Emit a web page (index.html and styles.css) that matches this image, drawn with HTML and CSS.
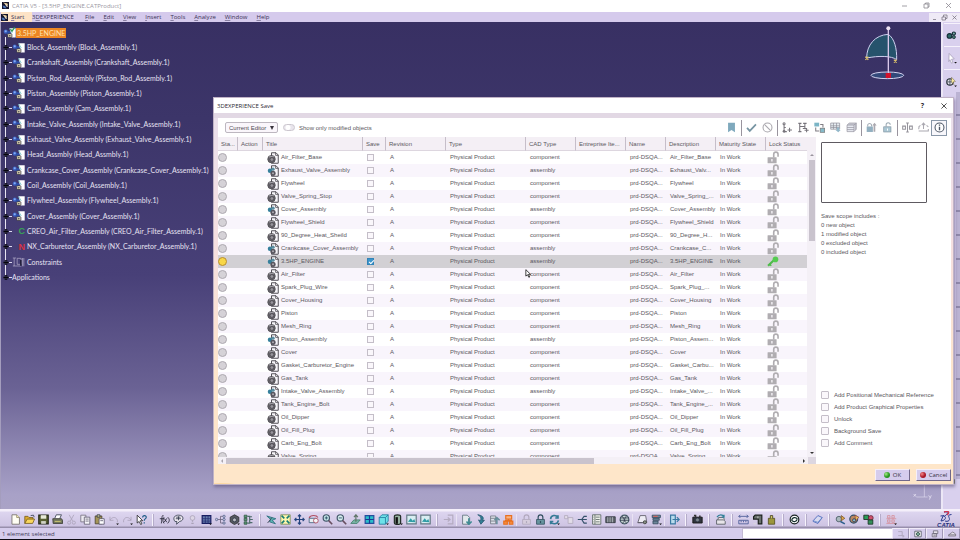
FILE: index.html
```html
<!DOCTYPE html>
<html lang="en">
<head>
<meta charset="utf-8">
<title>CATIA V5 - [3.5HP_ENGINE.CATProduct]</title>
<link rel="stylesheet" href="styles.css">
</head>
<body>
<svg class="sprite" aria-hidden="true">
  <symbol id="app" viewBox="0 0 14 14"><rect width="14" height="14" fill="#15152c"/><path d="M2 1l9 2 1 5-5-3z" fill="#f4d9a2"/><path d="M1 7l5 1 3 5-6-1z" fill="#4a74b8"/><path d="M7 5l4 5" stroke="#fff" stroke-width="2"/></symbol>
  <symbol id="product" viewBox="0 0 38 28"><path d="M19 0h18v27H25z" fill="#fff"/><path d="M19 0l8 14" stroke="#4bb4bd" stroke-width="2"/><circle cx="8" cy="10" r="6" fill="#3c62c4"/><circle cx="8" cy="9" r="3" fill="#88aef0"/><circle cx="17" cy="14" r="6" fill="#2d4fa8"/><rect x="14" y="16" width="12" height="11" rx="2" fill="#e6deb9" stroke="#282438" stroke-width="2"/><circle cx="20" cy="22" r="2" fill="#282438"/></symbol>
  <symbol id="expand" viewBox="0 0 10 10"><circle cx="5" cy="5" r="3.6" fill="#4a4668" stroke="#161426"/><path d="M5 1v8M1 5h8" stroke="#05050c" stroke-width="1.7"/></symbol>
  <symbol id="part" viewBox="0 0 32 32"><path d="M12 2h12l6 6v22H12z" fill="#f6f4f8" stroke="#4b484f" stroke-width="2.5"/><path d="M23 2v7h7" fill="none" stroke="#4b484f" stroke-width="2"/><circle cx="12" cy="19" r="10" fill="#68656c" stroke="#4b494e" stroke-width="2"/><circle cx="13" cy="20" r="5" fill="#98959c" stroke="#49474c" stroke-width="2"/><path d="M5 13l14-2" stroke="#b6b3ba" stroke-width="2"/></symbol>
  <symbol id="assembly" viewBox="0 0 32 32"><path d="M12 2h12l6 6v22H12z" fill="#f6f4f8" stroke="#4b484f" stroke-width="2.5"/><path d="M23 2v7h7" fill="none" stroke="#4b484f" stroke-width="2"/><circle cx="8" cy="15" r="6" fill="#36809c"/><circle cx="16" cy="11" r="4.5" fill="#5a8da0"/><circle cx="16" cy="22" r="7" fill="#58555e"/><circle cx="16" cy="22" r="2.5" fill="#b6b3ba"/></symbol>
  <symbol id="unlock" viewBox="0 0 32 36"><path d="M18 18V9a6 6 0 0 1 12 0v7" fill="none" stroke="#b0adb1" stroke-width="4.5"/><rect x="1" y="17" width="25" height="17" rx="1" fill="#b0adb1"/><path d="M13 22v7" stroke="#f3f0f5" stroke-width="4"/></symbol>
  <symbol id="key" viewBox="0 0 34 30"><path d="M3 27L20 11" stroke="#4dbb49" stroke-width="6"/><path d="M7 22l5 5" stroke="#4dbb49" stroke-width="4"/><circle cx="24" cy="9" r="8" fill="#55cb50"/></symbol>
</svg>

<header class="titlebar">
  <svg class="app-icon"><use href="#app"/></svg><h1>CATIA V5 - [3.5HP_ENGINE.CATProduct]</h1>
  <div class="window-controls">
    <button aria-label="Minimize"><svg viewBox="0 0 14 14"><path d="M2 8h10"/></svg></button>
    <button aria-label="Restore"><svg viewBox="0 0 14 14"><path d="M2 4h8v8H2zM5 4V2h7v8h-2"/></svg></button>
    <button aria-label="Close"><svg viewBox="0 0 14 14"><path d="M2 2l10 10M12 2L2 12"/></svg></button>
  </div>
</header>
<nav class="menubar">
  <a class="start" href="#"><svg class="app-icon"><use href="#app"/></svg><span><u>S</u>tart</span></a>
  <a class="platform" href="#">3<u>D</u>EXPERIENCE</a><a href="#"><u>F</u>ile</a><a href="#"><u>E</u>dit</a><a href="#"><u>V</u>iew</a><a href="#"><u>I</u>nsert</a><a href="#"><u>T</u>ools</a><a href="#"><u>A</u>nalyze</a><a href="#"><u>W</u>indow</a><a href="#"><u>H</u>elp</a>
  <div class="mdi-controls">
    <button aria-label="Minimize document"><svg viewBox="0 0 14 14"><path d="M4 11h6"/></svg></button>
    <button aria-label="Restore document"><svg viewBox="0 0 14 14"><path d="M2 6h7v6H2zM5 6V2h7v7H9"/></svg></button>
    <button aria-label="Close document"><svg viewBox="0 0 14 14"><path d="M3 3l8 8M11 3l-8 8"/></svg></button>
  </div>
</nav>

<main class="workspace">
  <section class="canvas">
    <div class="tree-root"><svg class="product"><use href="#product"/></svg><span>3.5HP_ENGINE</span><svg class="root-tick" viewBox="0 0 12 12"><path d="M1 5l4 5 6-9" fill="none" stroke="#2f9a52" stroke-width="3"/></svg></div>
    <ul class="tree" id="tree"></ul>
    <svg class="compass" viewBox="0 0 120 165">
      <path d="M5 99C5 60 30 30 70 28C88 40 96 70 95 104C80 92 40 92 5 99z" fill="#26536c" stroke="#cfd0ef" stroke-width="3"/>
      <ellipse cx="67" cy="151" rx="49" ry="10" fill="#33497a" stroke="#d5d3f0" stroke-width="3"/>
      <path d="M70 10v140" stroke="#d9c8ea" stroke-width="4"/><circle cx="70" cy="10" r="6" fill="#eee3f2"/>
      <rect x="62" y="144" width="16" height="15" fill="#d3122c"/><path d="M1 95l9 9M10 95l-9 9M87 104l8 9M95 104l-8 9" stroke="#dec36c" stroke-width="4"/>
    </svg>
    <svg class="axis" viewBox="0 0 60 54"><path d="M34 0v42M10 42h34" stroke="#ded9ef" stroke-width="2"/><path d="M2 33l7 8M9 33l-7 8M47 37l4 7M55 37l-6 13" stroke="#f0ecfa" stroke-width="2"/></svg>
  </section>
  <aside class="right-tools">
    <button aria-label="Product structure"><svg viewBox="0 0 28 28"><circle cx="9" cy="15" r="6" fill="#2d6969" stroke="#17303a" stroke-width="3"/><circle cx="20" cy="9" r="4" fill="#79aba5" stroke="#17303a" stroke-width="3"/><circle cx="20" cy="18" r="4" fill="#48756f" stroke="#17303a" stroke-width="2"/></svg></button>
    <button aria-label="Select"><svg viewBox="0 0 28 28"><path d="M8 1l13 14-7 1 4 8-4 2-4-9-3 5z" fill="#fff" stroke="#a7a0b9" stroke-width="2"/><path d="M21 23h7l-4 4z" fill="#111"/></svg></button>
    <button aria-label="Explore"><svg viewBox="0 0 28 28"><circle cx="10" cy="15" r="8" fill="#e4e1ea" stroke="#283039" stroke-width="3"/><path d="M3 15h14M10 7v16" stroke="#34414b" stroke-width="2"/><path d="M14 3l10 11-6 1 2 7-6-7z" fill="#f8e89c" stroke="#4c4937"/><path d="M21 24h7l-4 4z" fill="#111"/></svg></button>
    <div class="right-rail"></div>
    <svg class="tool-last" viewBox="0 0 28 20"><path d="M2 2h18v10H2z" fill="#98a72c" stroke="#444b1e" stroke-width="3"/><circle cx="10" cy="7" r="4" fill="#f3ec99"/></svg>
  </aside>

  <section class="dialog" role="dialog" aria-labelledby="dlg-title">
    <div class="dialog-title"><h2 id="dlg-title">3DEXPERIENCE Save</h2><button class="help">?</button><button aria-label="Close"><svg viewBox="0 0 14 14"><path d="M1 1l12 12M13 1L1 13"/></svg></button></div>
    <div class="dialog-body">
      <div class="dialog-tools">
        <label class="scope"><select aria-label="Scope"><option>Current Editor</option></select></label>
        <label class="toggle"><input type="checkbox"><span>Show only modified objects</span></label>
        <div class="actions">
          <button aria-label="Bookmark"><svg viewBox="0 0 32 32"><path d="M6 2h20v28l-10-7-10 7z" fill="#7fa9bd"/></svg></button><i></i>
          <button aria-label="Apply"><svg viewBox="0 0 32 32"><path d="M3 17l8 9L29 7" fill="none" stroke="#7795a3" stroke-width="5"/></svg></button>
          <button aria-label="Exclude"><svg viewBox="0 0 32 32"><circle cx="16" cy="16" r="13" fill="none" stroke="#a8a6ac" stroke-width="3"/><path d="M7 7l18 18" stroke="#a8a6ac" stroke-width="3"/></svg></button><i></i>
          <button aria-label="Select children"><svg viewBox="0 0 32 32"><g fill="none" stroke="#77747b" stroke-width="3"><circle cx="6" cy="5" r="3"/><path d="M6 8v20h8M6 16h5M22 17v12M16 23h13"/></g><circle cx="6" cy="27" r="4" fill="#77747b"/></svg></button>
          <button aria-label="Select all children"><svg viewBox="0 0 32 32"><path d="M5 2v27M5 13h15M20 2v18M1 4h9M1 28h9M15 4h10M14 19h12M25 18v12M19 24h12" fill="none" stroke="#77747b" stroke-width="3"/></svg></button>
          <button aria-label="Reserve"><svg viewBox="0 0 32 32"><rect x="1" y="2" width="14" height="11" fill="#7bb5c6"/><rect x="18" y="18" width="13" height="12" fill="#85bac9" stroke="#777" stroke-width="2"/><path d="M18 7h8v9M5 16v10h10" fill="none" stroke="#807d83" stroke-width="3"/></svg></button>
          <button aria-label="Export table"><svg viewBox="0 0 32 32"><path d="M2 3h26v18H2zM2 11h26M2 16h26M10 3v18M19 3v18" fill="#e7edf2" stroke="#8d8e98" stroke-width="2"/><path d="M20 16h7v7h4l-7 7-8-7h4z" fill="#93b8ca"/></svg></button>
          <button aria-label="Collections"><svg viewBox="0 0 32 32"><path d="M3 9l7-6h20v18l-7 7H3zM3 9h20v19M23 9l7-6M3 16h20M3 22h20M7 6h20v18" fill="#e6e9f0" stroke="#9695a0" stroke-width="2"/></svg></button><i></i>
          <button aria-label="Lock after save"><svg viewBox="0 0 32 32"><rect x="2" y="13" width="18" height="16" fill="#92afc0"/><path d="M5 13V8a6 6 0 0 1 11 0v5" fill="none" stroke="#a4adb7" stroke-width="3"/><path d="M22 28V10h-4l7-8 6 8h-4v18z" fill="#aaa8af"/></svg></button>
          <button aria-label="Unlock after save"><svg viewBox="0 0 32 32"><rect x="5" y="14" width="21" height="15" fill="#abc7d4" stroke="#8195a2" stroke-width="2"/><path d="M12 14V8a6 6 0 0 1 12 0" fill="none" stroke="#9caab4" stroke-width="3"/><path d="M16 19v6" stroke="#fff" stroke-width="3"/></svg></button><i></i>
          <button aria-label="Compare"><svg viewBox="0 0 32 32"><path d="M16 3v26M12 3h8M12 29h8M2 12h8v9H2zM22 12h8v9h-8z" fill="none" stroke="#96949c" stroke-width="3"/></svg></button>
          <button aria-label="Impact"><svg viewBox="0 0 32 32"><path d="M16 4v16M11 9l5-6 5 6M3 14l-1 7M2 14l5-4M30 14l-5-4M2 26h28v-6" fill="none" stroke="#aaa8b0" stroke-width="3"/></svg></button>
          <button class="pressed" aria-label="Information"><svg viewBox="0 0 32 32"><circle cx="16" cy="16" r="13" fill="#fff" stroke="#4c5665" stroke-width="3"/><path d="M16 14v10M16 7v4" stroke="#4c5665" stroke-width="4"/></svg></button>
        </div>
      </div>
      <div class="dialog-main">
        <div class="grid-pane">
          <div class="table-view">
            <table>
              <colgroup><col class="c-status"><col class="c-action"><col class="c-title"><col class="c-save"><col class="c-revision"><col class="c-type"><col class="c-cad"><col class="c-cad"><col class="c-name"><col class="c-cad"><col class="c-cad"><col></colgroup>
              <thead><tr><th>Sta...</th><th>Action</th><th>Title</th><th>Save</th><th>Revision</th><th>Type</th><th>CAD Type</th><th>Entreprise Ite...</th><th>Name</th><th>Description</th><th>Maturity State</th><th>Lock Status</th></tr></thead>
              <tbody id="rows"></tbody>
            </table>
          </div>
          <div class="scroll-y"><span></span><div class="thumb"></div><b></b></div>
          <div class="scroll-x"><span></span><div class="thumb"></div><b></b></div>
        </div>
        <aside class="info">
          <div class="preview"></div>
          <p>Save scope includes :<br>0 new object<br>1 modified object<br>0 excluded object<br>0 included object</p>
          <div class="options">
            <label><input type="checkbox">Add Positional Mechanical Reference</label>
            <label><input type="checkbox">Add Product Graphical Properties</label>
            <label><input type="checkbox">Unlock</label>
            <label><input type="checkbox">Background Save</label>
            <label><input type="checkbox">Add Comment</label>
          </div>
        </aside>
      </div>
    </div>
    <footer class="dialog-footer"><button><span class="dot green"></span>OK</button><button><span class="dot red"></span>Cancel</button></footer>
  </section>
  <svg class="pointer" viewBox="0 0 14 20"><path d="M2 1v15l4-3 3 6 2-1-3-6h5z" fill="#fff" stroke="#222" stroke-width="2"/></svg>
</main>

<div class="toolbar" id="toolbar"></div>
<footer class="statusbar"><span>1 element selected</span><input type="text" aria-label="Power input">
  <button aria-label="Command list"><svg viewBox="0 0 24 20"><path d="M5 4h10v10H5M15 14h4v3h-4" fill="none" stroke="#aaa3b8" stroke-width="2"/></svg></button>
  <button aria-label="Render"><svg viewBox="0 0 24 20"><path d="M4 3h16v14H4z" fill="#fff" stroke="#4d5360" stroke-width="2"/><circle cx="12" cy="10" r="4" fill="#7eae9c" stroke="#294640" stroke-width="2"/></svg></button>
  <button aria-label="Server"><svg viewBox="0 0 24 20"><path d="M8 2h11v7H8zM5 9h11v8H5zM8 13h6" fill="#e5e1eb" stroke="#6d6878" stroke-width="2"/></svg></button>
  <button aria-label="Session"><svg viewBox="0 0 24 20"><path d="M3 15h18v-5l-7-5-8 5zM3 12h18" fill="#e5e1eb" stroke="#77727f" stroke-width="2"/></svg></button>
</footer>
<script src="app.js"></script>
</body>
</html>
```
FILE: styles.css
```css
* { box-sizing: border-box; }
html, body { height: 100%; }
body { margin: 0; display: flex; flex-direction: column; overflow: hidden; background: #0c0a12; font: 6px/8px "Open Sans", "Noto Sans", sans-serif; color: #3b3650; padding-bottom: 1px; }
button { font: inherit; color: inherit; background: none; border: 0; padding: 0; display: grid; place-items: center; }
h1, h2, p, ul { margin: 0; padding: 0; font: inherit; }
a { color: inherit; text-decoration: none; }
svg { display: block; flex: none; }
.sprite { position: absolute; width: 0; height: 0; }
.app-icon { width: 7px; height: 7px; }

.titlebar { height: 12px; flex: none; background: #fff; display: flex; align-items: center; gap: 3px; padding: 0 8px 1px 2px; color: #9a979f; }
.window-controls { margin-left: auto; display: flex; gap: 15px; }
.window-controls svg { width: 7px; height: 7px; fill: none; stroke: #8b8890; stroke-width: 1.6; }
.menubar { height: 10px; flex: none; background: #d5caec; display: flex; align-items: center; padding-left: 1px; gap: 9px; color: #3a3355; }
.menubar u { text-underline-offset: 1px; text-decoration-thickness: 1px; text-decoration-color: #8b82a4; }
.menubar .start { display: flex; align-items: center; gap: 3px; background: #fde3c6; height: 10px; width: 31px; margin-right: -9px; }
.menubar .platform { margin-right: 2px; }
.mdi-controls { margin-left: auto; display: flex; height: 9px; background: #efeaf6; align-items: center; gap: 3px; padding: 0 2px; }
.mdi-controls svg { width: 7px; height: 7px; fill: none; stroke: #77717f; stroke-width: 1.5; }

.workspace { flex: 1; min-height: 0; display: flex; position: relative; }
.canvas { flex: 1; position: relative; padding: 3px 0 0 2px; border-left: 1px solid #a49dbd; background: linear-gradient(#383063 0%, #3c3569 20%, #484078 52%, #6a6294 75%, #a8a1c7 97%, #aaa3c6 100%); color: #e6e2f2; }
.tree-root { display: flex; align-items: center; gap: 1px; height: 15px; position: relative; font: 7px/9px Lato, "Noto Sans", sans-serif; }
.tree-root span { background: #ec8523; color: #ffe3ae; height: 10px; line-height: 10px; padding: 0 1px; margin-left: -1px; }
.product { width: 13px; height: 10px; }
.root-tick { position: absolute; left: 7px; top: 2px; width: 5px; height: 5px; }
.tree { list-style: none; display: grid; grid-auto-rows: 1fr; height: 245px; position: relative; font: 7px/9px Lato, "Noto Sans", sans-serif; }
.tree::before { content: ""; position: absolute; left: 2px; top: -3px; bottom: 8px; width: 1px; background: #e7e4f1; }
.tree li { display: flex; align-items: center; position: relative; white-space: nowrap; }
.tree .expand { width: 6px; height: 7px; }
.tree .dash { width: 3px; height: 1px; background: #dedaf0; }
.tree .product, .tree .letter, .tree .limits { margin-right: 2px; width: 13px; height: 10px; }
.tree .letter { font: bold 9px/10px "Liberation Sans", sans-serif; text-align: right; color: #38a556; }
.tree .letter.nx { color: #d73142; }
.compass { position: absolute; right: 36px; top: 3px; width: 40px; height: 55px; }
.axis { position: absolute; right: 8px; bottom: 8px; width: 20px; height: 18px; }
.right-tools { width: 19px; flex: none; background: #d9d0ee; border-left: 2px solid #ece7f6; display: flex; flex-direction: column; align-items: center; padding-top: 1px; }
.right-tools button { width: 16px; height: 23px; border-top: 1px solid #f6f2fc; }
.right-tools button svg { width: 11px; height: 11px; }
.right-rail { flex: 1; width: 4px; margin: 0 0 0 auto; background: repeating-linear-gradient(#bbb3d3 0 22px, #8f88aa 22px 24px); }
.tool-last { width: 10px; height: 7px; margin-bottom: 23px; }

.dialog { position: absolute; left: 213px; right: 6px; top: 75px; bottom: 24px; background: #fee6c9; display: flex; flex-direction: column; border: 1px solid #c0b3c6; box-shadow: 1px 2px 3px #5d547c99; color: #5a575e; }
.dialog-title { height: 15px; flex: none; background: #fff; display: flex; align-items: center; color: #2c2931; padding: 0 6px 0 3px; gap: 17px; }
.dialog-title h2 { margin-right: auto; }
.dialog-title svg { width: 6px; height: 6px; stroke: #333; stroke-width: 2; }
.dialog-title .help { font-weight: bold; font-size: 7px; }
.dialog-body { flex: 1; min-height: 0; display: flex; flex-direction: column; padding: 0 2px 0 4px; border-top: 5px solid #e2d8e4; background: linear-gradient(#eadfeb, #f5dfe1 35%, #fee5cb 75%); font-family: "Liberation Sans", Arial, sans-serif; }
.dialog-tools { height: 19px; flex: none; background: #fff; display: flex; align-items: center; padding: 0 4px 0 7px; gap: 5px; }
.scope { position: relative; }
.scope::after { content: ""; position: absolute; right: 4px; top: 4px; border: 2px solid transparent; border-top: 4px solid #39353d; border-bottom: 0; }
.scope select { appearance: none; font: inherit; color: #504d54; background: #faf6fb; border: 1px solid #bdb7c0; border-radius: 2px; width: 53px; height: 11px; padding: 0 3px; display: block; }
.toggle { display: flex; align-items: center; gap: 4px; }
.toggle input { appearance: none; width: 12px; height: 7px; margin: 0; border: 1px solid #ccc7cf; border-radius: 4px; background: radial-gradient(circle at 4px 50%, #fff 2px, #e9e5ec 3px); }
.actions { margin-left: auto; display: flex; align-items: center; height: 17px; }
.actions button { width: 16px; height: 16px; }
.actions button svg { width: 11px; height: 11px; }
.actions i { width: 1px; height: 16px; background: #99949e; margin: 0 1px 0 2px; }
.actions .pressed { border: 1px solid #8997a8; background: #f8f7fb; }
.dialog-main { flex: 1; min-height: 0; display: flex; }
.grid-pane { flex: 1; min-width: 0; display: grid; grid-template: minmax(0, 1fr) 7px / minmax(0, 1fr) 9px; background: #fff; }
.table-view { overflow: hidden; }
table { table-layout: fixed; border-collapse: separate; border-spacing: 0; width: 100%; }
.c-status { width: 20px; } .c-action { width: 25px; } .c-title { width: 100px; } .c-save { width: 23px; } .c-revision { width: 60px; } .c-type { width: 80px; } .c-cad { width: 50px; } .c-name { width: 40px; }
th { font-weight: normal; text-align: left; height: 14px; padding: 0 0 0 3px; background: #f4eff5; border-right: 1px solid #c6bec9; border-bottom: 1px solid #ddd6df; white-space: nowrap; overflow: hidden; }
th:last-child { border-right: 0; }
td { height: 13px; line-height: 13px; padding: 0 0 0 4px; white-space: nowrap; overflow: hidden; }
td:first-child { padding-left: 0; }
tbody tr:nth-child(even) { background: #f9f5fc; }
tbody tr.selected { background: #d2d0d4; }
.state { display: block; width: 9px; height: 9px; border-radius: 50%; background: #d5d2d7; border: 1px solid #aeaab1; }
.selected .state { background: #f8d748; border-color: #b78e32; }
.name-cell { display: flex; align-items: center; gap: 2px; height: 13px; }
.name-cell svg { width: 12px; height: 12px; }
td:nth-child(12) { padding-left: 1px; }
td:nth-child(12) svg { width: 12px; height: 13px; }
td input, .options input { appearance: none; display: block; width: 7px; height: 7px; margin: 0; border: 1px solid #c4bec8; background: #faf7fb; }
td input:checked { border-color: #3283b8; background: #3c95cb; position: relative; }
td input:checked::after { content: ""; position: absolute; left: 1px; top: 1px; width: 4px; height: 2px; border: solid #fff; border-width: 0 0 1px 1px; transform: rotate(-45deg); }
.scroll-y { margin-top: 14px; position: relative; background: #f4f0f6; display: flex; flex-direction: column; align-items: center; padding: 3px 0; }
.scroll-y::before { content: ""; position: absolute; left: 0; right: 0; top: -14px; height: 14px; background: #f4eff5; }
.scroll-y .thumb { width: 6px; height: 27%; background: #c9c3cd; margin-top: 4px; }
.scroll-y span { border: 2px solid transparent; border-bottom: 2px solid #99949d; border-top: 0; }
.scroll-y b { border: 2px solid transparent; border-top: 2px solid #333; border-bottom: 0; margin-top: auto; }
.scroll-x { grid-column: 1 / 3; background: #f4f0f6; display: flex; align-items: center; padding: 0 3px; border-right: 8px solid #ddd7e1; }
.scroll-x .thumb { height: 6px; width: 63%; margin-left: 3px; background: #c9c3cd; }
.scroll-x span { border: 2px solid transparent; border-right-color: #aaa5ad; border-left: 0; }
.scroll-x b { border: 2px solid transparent; border-left-color: #333; border-right: 0; margin-left: auto; }
.info { width: 135px; flex: none; background: #fff; padding: 5px 8px 15px 5px; display: flex; flex-direction: column; }
.preview { width: 106px; height: 61px; border: 1px solid #5e5a61; border-radius: 1px; }
.info p { line-height: 9px; margin-top: 9px; }
.options { margin-top: auto; }
.options label { display: flex; align-items: center; height: 12px; gap: 5px; white-space: nowrap; }
.options input { width: 8px; height: 8px; border-radius: 1px; }
.dialog-footer { height: 20px; flex: none; display: flex; justify-content: flex-end; align-items: center; gap: 6px; padding: 1px 2px 0; background: radial-gradient(ellipse at 7px 20px, #20445c 0 5px, #6badc4 9px, #fbca79 13px, transparent 23px); color: #37303f; }
.dialog-footer button { display: flex; align-items: center; justify-content: center; gap: 3px; width: 35px; height: 12px; background: #d5cced; border: 1px solid #f5effa; border-right-color: #71688a; border-bottom-color: #71688a; }
.dot { width: 6px; height: 6px; border-radius: 50%; }
.green { background: radial-gradient(circle at 2px 2px, #a5eb86, #26951e 55%); }
.red { background: radial-gradient(circle at 2px 2px, #f58587, #a91527 55%); }
.pointer { position: absolute; left: 525px; top: 247px; width: 6px; height: 9px; }

.toolbar { height: 19px; flex: none; display: flex; align-items: center; padding: 2px 0 0 8px; background: linear-gradient(#f4effa 0 2px, #ddd5ef 3px, #cec4e3 17px, #988fac 18px); }
.toolbar button { width: 14px; height: 15px; }
.toolbar button svg { width: 11px; height: 11px; }
.toolbar .sep { width: 9px; height: 12px; background: linear-gradient(90deg, transparent 4px, #f6f2fc 4px 5px, #b5acc9 5px 6px, transparent 6px); }
.toolbar .sep.narrow { width: 4px; background: linear-gradient(90deg, transparent 1px, #e9e3f3 1px 2px, transparent 2px); }
.toolbar .brand { margin-left: auto; width: 22px; height: 17px; margin-right: 3px; font: italic bold 6px/6px "Liberation Sans", sans-serif; color: #25317a; display: flex; flex-direction: column; align-items: center; }
.brand svg { width: 16px; height: 11px; }
.statusbar { height: 11px; flex: none; background: #d5ccec; display: flex; align-items: stretch; color: #413a56; }
.statusbar span { margin: auto auto auto 2px; }
.statusbar input { width: 150px; border: 1px solid #c3bad4; border-right: 0; padding: 0; background: #fff; font: inherit; }
.statusbar button { width: 17px; border: 1px solid #f0eaf8; border-right-color: #a198b6; border-bottom-color: #a198b6; }
.statusbar svg { width: 10px; height: 8px; }
```
FILE: app.js
```js
const treeItems = [
  ['Block_Assembly', 'product'], ['Crankshaft_Assembly', 'product'], ['Piston_Rod_Assembly', 'product'],
  ['Piston_Assembly', 'product'], ['Cam_Assembly', 'product'], ['Intake_Valve_Assembly', 'product'],
  ['Exhaust_Valve_Assembly', 'product'], ['Head_Assmbly', 'product'], ['Crankcase_Cover_Assembly', 'product'],
  ['Coil_Assembly', 'product'], ['Flywheel_Assembly', 'product'], ['Cover_Assembly', 'product'],
  ['CREO_Air_Filter_Assembly', 'creo'], ['NX_Carburetor_Assembly', 'nx'], ['Constraints', 'limits'], ['Applications', 'none']
];
const nodeIcons = {
  product: '<svg class="product"><use href="#product"/></svg>',
  creo: '<span class="letter">C</span>',
  nx: '<span class="letter nx">N</span>',
  limits: '<svg class="limits" viewBox="0 0 38 30"><path d="M2 3h10M6 3v24M2 27h26M15 4h12v18H15zM31 3v25M35 3v25" fill="none" stroke="#b9b2ce" stroke-width="2"/><path d="M26 9v17" stroke="#15142c" stroke-width="4"/></svg>',
  none: ''
};
document.getElementById('tree').innerHTML = treeItems.map(([name, kind]) => {
  const label = kind === 'limits' || kind === 'none' ? name : `${name} (${name}.1)`;
  return `<li><svg class="expand"><use href="#expand"/></svg><span class="dash"></span>${nodeIcons[kind]}<span>${label}</span></li>`;
}).join('');

// title, CAD type (c = component, a = assembly), shortened description
const objects = [
  ['Air_Filter_Base', 'c'], ['Exhaust_Valve_Assembly', 'a', 'Exhaust_Valv...'], ['Flywheel', 'c'],
  ['Valve_Spring_Stop', 'c', 'Valve_Spring_...'], ['Cover_Assembly', 'a'], ['Flywheel_Shield', 'c'],
  ['90_Degree_Heat_Sheild', 'c', '90_Degree_H...'], ['Crankcase_Cover_Assembly', 'a', 'Crankcase_C...'],
  ['3.5HP_ENGINE', 'a'], ['Air_Filter', 'c'], ['Spark_Plug_Wire', 'c', 'Spark_Plug_...'], ['Cover_Housing', 'c'],
  ['Piston', 'c'], ['Mesh_Ring', 'c'], ['Piston_Assembly', 'a', 'Piston_Assem...'], ['Cover', 'c'],
  ['Gasket_Carburetor_Engine', 'c', 'Gasket_Carbu...'], ['Gas_Tank', 'c'], ['Intake_Valve_Assembly', 'a', 'Intake_Valve_...'],
  ['Tank_Engine_Bolt', 'c', 'Tank_Engine_...'], ['Oil_Dipper', 'c'], ['Oil_Fill_Plug', 'c'], ['Carb_Eng_Bolt', 'c'], ['Valve_Spring', 'c']
];
document.getElementById('rows').innerHTML = objects.map(([title, cad, desc]) => {
  const modified = title === '3.5HP_ENGINE';
  return `<tr${modified ? ' class="selected"' : ''}><td><span class="state"></span></td><td></td>
    <td><div class="name-cell"><svg><use href="#${cad === 'a' ? 'assembly' : 'part'}"/></svg>${title}</div></td>
    <td><input type="checkbox" aria-label="Save ${title}"${modified ? ' checked' : ''}></td><td>A</td><td>Physical Product</td>
    <td>${cad === 'a' ? 'assembly' : 'component'}</td><td></td><td>prd-DSQA...</td><td>${desc || title}</td><td>In Work</td>
    <td><svg><use href="#${modified ? 'key' : 'unlock'}"/></svg></td></tr>`;
}).join('');

// Tool icons are drawn on a 28 x 28 grid
const p = (d, fill = 'none', stroke = '#2d3548', w = 2) => `<path d="${d}" fill="${fill}" stroke="${stroke}" stroke-width="${w}"/>`;
const c = (x, y, r, fill = 'none', stroke = '#2d3548', w = 2) => `<circle cx="${x}" cy="${y}" r="${r}" fill="${fill}" stroke="${stroke}" stroke-width="${w}"/>`;
const drop = p('M21 24h7l-4 4z', '#111', 'none');
const padlock = (fill, stroke) => p('M8 14V8a6 6 0 0 1 12 0v6', 'none', stroke, 3) + p('M4 14h20v12H4z', fill, stroke) + p('M14 18v5', 'none', stroke, 3);
const picture = p('M2 3h24v22H2z', '#d8edf1', '#637984', 3) + p('M5 20l7-9 5 6 4-4 3 8z', '#2f9ca5', 'none');
const tools = [
  ['New', p('M5 2h12l7 7v17H5z', '#fffef4', '#6e6962') + p('M17 2v7h7', '#fff7b8', '#8e8368')],
  ['Open', p('M2 24V6h8l3 3h10v5', '#dcaa2d', '#72591f') + p('M2 24l6-11h19l-5 11z', '#f9d65e', '#72591f') + p('M17 4l7-1 2 5')],
  ['Save', p('M2 3h24v22H2z', '#596032', '#222617', 3) + p('M7 3h14v9H7z', '#e8ead9', 'none') + p('M8 18h12v7H8z', '#d1d3c6', 'none')],
  ['Print', p('M7 11l4-9h13l-4 9', '#fff') + p('M2 12h22l3 4v8H3z', '#777c60', '#303329') + p('M7 19h15', '#e5d66a', '#d9d373')],
  ['Cut', p('M8 2l9 16M20 2l-9 16', 'none', '#aaa2b7') + c(8, 22, 4, 'none', '#aaa2b7') + c(20, 22, 4, 'none', '#aaa2b7')],
  ['Copy', p('M2 3h13v17H2z', '#ece9f0', '#716d7c') + p('M11 8h14v18H11zM14 13h8M14 18h8', '#f6f5f9', '#5e5b6d')],
  ['Paste', p('M3 5h17v20H3z', '#a49457', '#48412b') + p('M8 2h7v6H8z', '#d5cf96') + p('M13 12h13v14H13zM16 17h7', '#fff', '#545067')],
  ['Undo', p('M5 7v9h9M5 16C9 8 20 5 24 16v5', 'none', '#a9a1b8') + drop],
  ['Redo', p('M23 7v9h-9M23 16C19 8 8 5 4 16v5', 'none', '#a9a1b8') + drop],
  ['Help', p('M3 3v20l5-4 4 8 3-2-4-8h6z', '#fff', '#222') + p('M17 9c0-7 10-6 9 0-1 4-5 3-5 8M21 21v3', 'none', '#205d88', 3)], 0,
  ['Formula', p('M12 5C7 1 8 8 6 24M2 12h10M13 11l7 10M20 11l-7 10M13 8c-4 6-4 11 0 16M22 8c6 5 5 11 0 16', 'none', '#191b29', 2)],
  ['Comment', p('M5 19C-2 10 5 2 15 3c13 0 14 14 2 16l-8 7 1-7z', '#eee9f1') + p('M8 8h11M7 12h13M14 6v10')],
  ['Hint', c(14, 10, 6, '#ddd6e5', '#aaa2b7') + p('M14 16v4M11 24h6', 'none', '#aaa2b7', 3)],
  ['Table', p('M3 4h22v20H3z', '#667dac', '#171c60', 3) + p('M3 12h22M3 18h22M11 4v20M18 4v20', 'none', '#242c70') + drop],
  ['Relations', p('M4 14h10M14 6v17M14 6h8M14 14h8M14 23h8', 'none', '#6a6179') + [[4, 14], [23, 6], [23, 14], [23, 23]].map(([x, y]) => c(x, y, 3, '#c9c4dc', '#53648c')).join('')],
  ['Catalog', p('M3 8l11-6 11 6v12l-11 7-11-7z', '#555960', '#26292c') + c(14, 15, 5, '#babcc0') + drop],
  ['Structure', p('M3 3h7v6H3zM3 11h7v6H3zM3 20h7v6H3z', '#589c74', '#315644') + p('M11 6h6v17h-6M17 14h8M23 7h-6M24 22h-7', 'none', '#506c6d', 3)], 0,
  ['Fly', p('M2 5l23 7-9 4 8 9-15-5 3-6z', '#5eb3b2', '#256a79') + p('M4 23L15 9')],
  ['Fit all', p('M2 2h24v24H2z', '#fff8ad', '#788951') + p('M4 4l7 7M24 4l-7 7M4 24l7-7M24 24l-7-7', 'none', '#167c73', 4)],
  ['Pan', p('M14 2v24M2 14h24M10 6l4-4 4 4M10 22l4 4 4-4M6 10l-4 4 4 4M22 10l4 4-4 4', 'none', '#23437e', 3)],
  ['Rotate', p('M3 10C6 2 22 2 25 9', 'none', '#b05063', 3) + p('M3 11h17v11H3z', '#e6eef2', '#3c5a78') + c(20, 17, 6, '#f2f4f8', '#a83f50')],
  ['Zoom in', c(11, 10, 8, '#c6e7e9', '#415668', 3) + p('M17 17l9 9', 'none', '#684f61', 4) + p('M7 10h8M11 6v8', 'none', '#193f58')],
  ['Zoom out', c(11, 10, 8, '#d6edee', '#415668', 3) + p('M17 17l9 9', 'none', '#684f61', 4) + p('M7 10h8', 'none', '#193f58')],
  ['Normal view', p('M2 24l8-9h16l-8 9z', '#78b6a6', '#3f7867') + p('M15 20V3M10 8l5-6 5 6', 'none', '#5f7467', 3)],
  ['Multi view', p('M3 4h22v20H3z', '#29beca', '#254d9d', 3) + p('M14 4v20M3 14h22', 'none', '#173b96', 3)],
  ['Isometric view', p('M3 9l7-7h16v16l-7 8H3zM3 9h16v17M19 9l7-7', '#6de1e8', '#1f769c') + drop],
  ['Shading', p('M6 6c0-5 16-5 16 0v17c0 5-16 5-16 0z', '#97b2a2', '#202b25', 3) + p('M12 8v17', 'none', '#111', 6) + drop],
  ['Hide or show', picture], ['Swap visible space', picture], 0,
  ['Exit', p('M12 3h13v22H12M2 14h15M12 9l6 5-6 5', 'none', '#b4abc0', 3)], 1,
  ['Import', p('M4 3h12l6 6v17H4z', '#e1e8eb', '#586c76') + p('M20 11v14M14 19l6 7 7-7', 'none', '#3f8b93', 4)],
  ['Get', p('M7 2c15 2 16 9 12 15l5-1-9 10-6-11 5 2C17 9 13 5 7 2z', '#347f96', '#22566e')],
  ['Put', p('M4 5h13v20H4zM4 11h13M4 18h13', '#dbdfe7', '#6f7581') + p('M20 26V11M14 16l6-7 7 7', 'none', '#668e9a', 4)],
  ['Workspace', p('M7 4h15v9H7z', '#f9b384', '#e8701f', 3) + p('M2 18h9v8H2zM16 18h9v8h-9zM14 13v7M5 17h18', '#f68a3c', '#e8701f', 3)], 1,
  ['Reserved', padlock('#d6cddd', '#b1a8bd')], ['Unlock', padlock('#67949f', '#304e5e')],
  ['Refresh', p('M4 13C5 2 18 1 23 9M23 3v7h-7M24 16c-2 10-14 12-20 4M4 26v-7h7', 'none', '#367b96', 4) + drop],
  ['Send', p('M4 4h8v8H4zM13 9h12v15H13z', '#e2dce8', '#b1a9bc')],
  ['Share', p('M2 14h10M12 14l6-8h7M12 14h13M12 14l6 9h7', 'none', '#35516a', 3)],
  ['Report', p('M4 2h21v24H4zM10 2v24M12 8h10M12 14h10M12 20h10M6 8h1M6 14h1M6 20h1', '#eef0ea', '#52605c')],
  ['Barcode', p('M2 7h24v15H2z', '#62676d', '#282f37') + p('M7 8v13M13 8v13M19 8v13', 'none', '#b9c1c6')],
  ['World', c(14, 14, 11, '#c5d3d2', '#465b66', 3) + p('M3 10h22M2 16h24M7 5c8 8 9 14 1 19M20 4c-8 8-7 15 0 20')], 1,
  ['Drive', p('M2 22L8 4h14l3 18zM2 22h12', '#eeedf4', '#55535f') + c(20, 21, 4, '#899185', '#353a35')],
  ['Server', p('M3 3h21v6H3zM5 11h16v5H5zM5 18h13v7H5z', '#6c8799', '#31485a') + p('M6 6h11', 'none', '#d5675f', 3) + drop], 1,
  ['Next', p('M4 3h12v22H4zM9 14h17M20 8l6 6-6 6', '#b9dcec', '#3979a2', 3)], 0,
  ['Camera', p('M2 8h24v15H2z', '#30353d', '#111') + p('M5 4h4v4M20 4v4', 'none', '#333', 4) + c(14, 15, 5, '#7c858b')], 0,
  ['Archive', p('M4 15h18l4 4v7H4zM7 15l2-6h13l2 6', '#e7e4e9', '#4c5258') + p('M5 8c5-8 15-7 18-1M23 2v6h-6', 'none', '#318199', 3)], 0,
  ['Measure between', p('M2 6h24M6 2L2 6l4 4M22 2l4 4-4 4M2 16h24v9H2zM8 17v4M14 17v4M20 17v4', 'none', '#3d5090')],
  ['Measure item', p('M8 3h17v22h-9V13H4V7z', '#69716c', '#1b211d', 3) + p('M15 6v5M4 25h7', 'none', '#ddd')],
  ['Inertia', p('M6 11h16v15H6z', '#9b963b', '#4f4a18') + p('M11 11V4h6v7', '#d3cc67', '#39351a')], 0,
  ['Update', c(14, 14, 11, '#fff', '#182221', 3) + p('M7 17c0-9 11-10 14-4M21 11c0 9-10 11-14 5', 'none', '#15302d', 3)], 0,
  ['Material', p('M3 17L15 4l11 5-11 15-12-5z', '#d7d9f0', '#3b5cb5') + p('M3 17l12 4L26 9', 'none', '#6687c9')], 0,
  ['Analysis', c(10, 13, 7, '#aab8bd', '#40565d') + p('M16 4l9 7-9 6z', '#e0a94c', '#7a572c') + p('M14 19l11 6', 'none', '#2d5f8d', 4)],
  ['Render', c(12, 13, 10, '#ba8761', '#304f68', 3) + p('M15 3l10 5-8 10z', '#e5bc59', '#924a49') + c(13, 16, 4, '#8bbacb')],
  ['Compare', p('M2 3h12v11H2z', '#2a9c57', '#191e1a') + c(20, 10, 6, '#cf526e', '#61293a') + p('M13 15h12v11H13z', '#348e58', '#172f21')], 0,
  ['Grid', p('M4 4h6v6H4zM15 4h6v6h-6zM4 15h6v6H4zM15 15h6v6h-6zM1 12h25M1 24h25', 'none', '#d68c98') + drop]
];
document.getElementById('toolbar').innerHTML = tools.map(t =>
  t === 0 ? '<span class="sep"></span>' : t === 1 ? '<span class="sep narrow"></span>' :
  `<button aria-label="${t[0]}"><svg viewBox="0 0 28 28">${t[1]}</svg></button>`
).join('') + `<div class="brand"><svg viewBox="0 0 32 22">${p('M12 2c10-2 8 5 1 8M5 10c13-3 13 9 1 10l5-12', 'none', '#283b8e', 2)}${p('M27 7c-12 1-1 7-5 12-2 2-6 2-8 1', 'none', '#283b8e', 2)}${p('M12 2c9-3 12 0 6 6', 'none', '#cf3754', 3)}</svg><span>CATIA</span></div>`;
```
